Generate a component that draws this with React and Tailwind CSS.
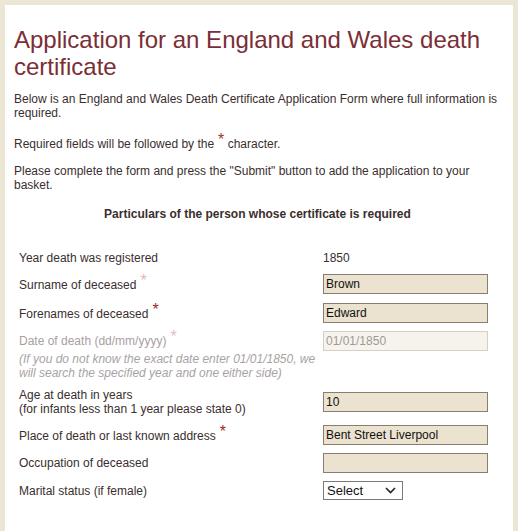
const font = { fontFamily: '"Liberation Sans", Arial, sans-serif' };

function Star({ tone = "text-[#a3262c]" }) {
  return <span className={`ml-[4px] align-[3px] text-[16px] leading-[0] ${tone}`}>*</span>;
}

function Field({ value, disabled }) {
  return (
    <div
      className={
        disabled
          ? "flex h-[20px] w-[165px] items-center border border-[#d6cfc4] bg-[#f6f3ec] px-[2px] text-[12px] text-[#9d9a96]"
          : "flex h-[20px] w-[165px] items-center border border-[#8a7c6f] bg-[#ebe2d0] px-[2px] text-[12px] text-[#111]"
      }
    >
      {value}
    </div>
  );
}

function Row({ className = "", label, children }) {
  return (
    <div className={`flex items-center ${className}`}>
      <div className="w-[304px] shrink-0 leading-[14px]">{label}</div>
      {children}
    </div>
  );
}

export default function App() {
  return (
    <div className="min-h-[531px] bg-[#ece6d4] px-[5px] pt-[5px]" style={font}>
      <div className="h-[526px] overflow-hidden bg-white pl-[9px] pr-[10px] text-[12px] leading-[14px] text-[#3a2e2e]">
        <h1 className="mt-[21px] text-[24px] font-normal leading-[27px] text-[#7b2e35]">
          Application for an England and Wales death certificate
        </h1>

        <p className="mt-[12px]">
          Below is an England and Wales Death Certificate Application Form where full information is required.
        </p>
        <p className="mt-[17px]">
          Required fields will be followed by the<Star tone="text-[#a1392c]" /> character.
        </p>
        <p className="mt-[13px]">
          Please complete the form and press the "Submit" button to add the application to your basket.
        </p>

        <h2 className="mt-[15px] pr-[2px] text-center text-[12px] font-bold">
          Particulars of the person whose certificate is required
        </h2>

        <div className="pl-[5px]">
          <Row className="mt-[27px] h-[20px]" label="Year death was registered">
            <span>1850</span>
          </Row>
          <Row className="mt-[6px]" label={<span className="relative top-[1px]">Surname of deceased<Star tone="text-[#e4b6b8]" /></span>}>
            <Field value="Brown" />
          </Row>
          <Row className="mt-[9px]" label={<span className="relative top-[1px]">Forenames of deceased<Star /></span>}>
            <Field value="Edward" />
          </Row>
          <Row className="mt-[8px]" label={<span className="text-[#a9a0a0]">Date of death (dd/mm/yyyy)<Star tone="text-[#dcc0c2]" /></span>}>
            <Field value="01/01/1850" disabled />
          </Row>
          <p className="w-[304px] pt-[1px] italic text-[#a9a3a3]">
            (If you do not know the exact date enter 01/01/1850, we will search the specified year and one either side)
          </p>
          <Row
            className="mt-[8px]"
            label={
              <>
                Age at death in years
                <br />
                (for infants less than 1 year please state 0)
              </>
            }
          >
            <Field value="10" />
          </Row>
          <Row className="mt-[9px]" label={<span className="relative top-[1px]">Place of death or last known address<Star /></span>}>
            <Field value="Bent Street Liverpool" />
          </Row>
          <Row className="mt-[8px]" label="Occupation of deceased">
            <Field value="" />
          </Row>
          <Row className="mt-[8px]" label="Marital status (if female)">
            <div className="flex h-[19px] w-[80px] items-center justify-between border border-[#7a7a7a] bg-white pl-[3px] pr-[6px] text-[13px] text-[#111]">
              <span>Select</span>
              <svg width="11" height="7" viewBox="0 0 11 7" fill="none">
                <path d="M1 1l4.5 4.5L10 1" stroke="#222" strokeWidth="1.6" />
              </svg>
            </div>
          </Row>
        </div>
      </div>
    </div>
  );
}
